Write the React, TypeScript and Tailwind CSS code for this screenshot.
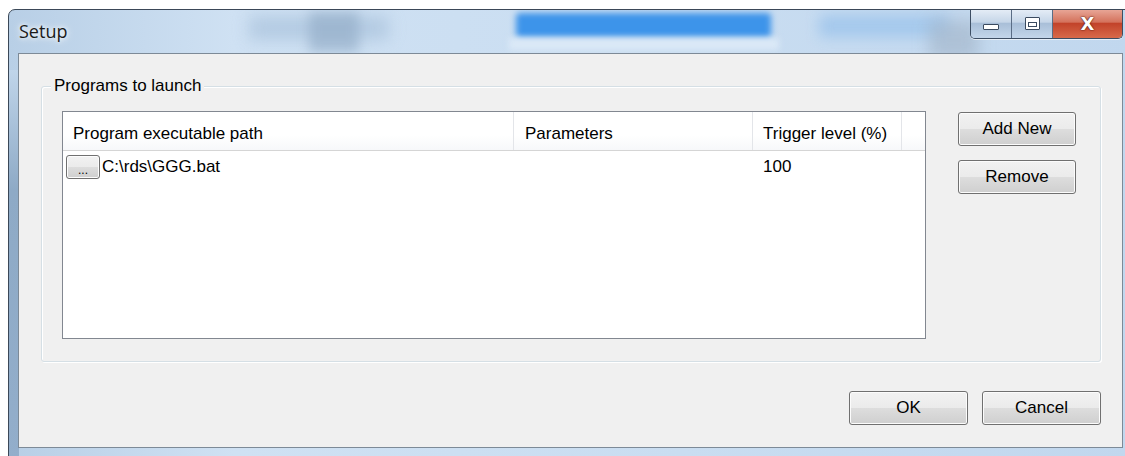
import type { ReactNode } from 'react';

const uiFont = { fontFamily: '"Liberation Sans", Arial, sans-serif' };

function WinButton({ children, className = '' }: { children: ReactNode; className?: string }) {
  return (
    <div
      className={`flex items-center justify-center rounded-[3px] border border-[#707070] shadow-[inset_0_0_0_1px_#fcfcfc] bg-[linear-gradient(#f2f2f2_0%,#ebebeb_50%,#dddddd_51%,#cfcfcf_100%)] text-[17px] text-black ${className}`}
    >
      {children}
    </div>
  );
}

function CaptionButtons() {
  return (
    <div className="flex h-[30px] -mt-px rounded-b-[5px] border border-t-0 border-[#3d4e63] overflow-hidden shadow-[0_1px_0_rgba(255,255,255,0.6)]">
      <div className="w-[41px] flex items-center justify-center bg-[linear-gradient(#e6eef7,#c6d6e8_45%,#a9bfd8_50%,#c3d6ea)] border-r border-[#5a6d85]">
        <div className="w-[16px] h-[6px] mt-[6px] rounded-[1px] border border-[#3b4b60] bg-white" />
      </div>
      <div className="w-[41px] flex items-center justify-center bg-[linear-gradient(#e6eef7,#c6d6e8_45%,#a9bfd8_50%,#c3d6ea)] border-r border-[#5a6d85]">
        <div className="w-[15px] h-[13px] rounded-[1px] border border-[#3b4b60] bg-white flex items-center justify-center">
          <div className="w-[9px] h-[5px] border border-[#3b4b60] mt-px" />
        </div>
      </div>
      <div className="w-[69px] flex items-center justify-center bg-[linear-gradient(#e9a99a,#d4725c_45%,#c2432a_50%,#d86a4a)]">
        <span className="text-white font-bold text-[18px] leading-none [text-shadow:0_0_1px_#4a1208,0_0_2px_#5a1a10]" style={{ fontFamily: '"DejaVu Sans", sans-serif' }}>
          X
        </span>
      </div>
    </div>
  );
}

function ProgramList() {
  return (
    <div className="w-[864px] h-[228px] border border-[#828790] bg-white flex flex-col">
      <div className="flex h-[39px] border-b border-[#d5d5d5] bg-[linear-gradient(#ffffff,#ffffff_60%,#f7f8fa)]">
        <div className="w-[451px] border-r border-[#e3e5e9] flex items-center pl-[10px] pt-[5px]">Program executable path</div>
        <div className="w-[239px] border-r border-[#e3e5e9] flex items-center pl-[11px] pt-[5px]">Parameters</div>
        <div className="w-[149px] border-r border-[#e3e5e9] flex items-center pl-[10px] pt-[5px]">Trigger level (%)</div>
        <div className="flex-1" />
      </div>
      <div className="flex h-[30px] items-center pt-[2px]">
        <div className="w-[451px] flex items-center pl-[3px]">
          <WinButton className="w-[34px] h-[24px] items-end pb-[2px] !text-[12px] leading-none">...</WinButton>
          <span className="ml-[2px]">C:\rds\GGG.bat</span>
        </div>
        <div className="w-[239px]" />
        <div className="pl-[10px]">100</div>
      </div>
    </div>
  );
}

export default function App() {
  return (
    <div className="w-[1125px] h-[456px] bg-white overflow-hidden pl-[8px] pt-[9px]" style={uiFont}>
      <div className="relative w-[1125px] h-[460px] rounded-tl-[7px] border border-[#3b4858] bg-[linear-gradient(90deg,#b8cfe6,#cfe1f3_20%,#c9ddf1_60%,#c1d7ee)] overflow-hidden flex flex-col px-[9px]">
        {/* blurred desktop showing through the glass */}
        <div className="absolute left-[240px] top-[6px] w-[140px] h-[24px] bg-[#a9c2dc] blur-[8px] opacity-70" />
        <div className="absolute left-[300px] top-[2px] w-[50px] h-[40px] bg-[#8fa9c4] blur-[6px] opacity-60" />
        <div className="absolute left-[507px] top-[3px] w-[255px] h-[25px] rounded-[4px] bg-[#3d94ea] blur-[3px]" />
        <div className="absolute left-[500px] top-[28px] w-[270px] h-[12px] bg-[#dbe9f7] blur-[3px]" />
        <div className="absolute left-[810px] top-[5px] w-[130px] h-[22px] bg-[#9cc4ec] blur-[7px] opacity-80" />
        <div className="absolute left-[920px] top-[10px] w-[50px] h-[40px] bg-[#a5b8cc] blur-[8px] opacity-70" />
        <div className="absolute left-0 top-[60px] w-[10px] h-[400px] bg-[linear-gradient(#c0d5ea,#8eaac6_30%,#93aecb)]" />
        <div className="absolute left-0 bottom-0 w-full h-[12px] bg-[linear-gradient(90deg,#7f9cb9,#c7dcf0_10%,#c5dbf0_60%,#9eb6ce_64%,#c7dcf0_70%)]" />

        {/* title bar */}
        <div className="relative h-[43px] flex items-start justify-between">
          <span className="text-[18px] text-[#1a1a1a] mt-[8px] ml-[1px] [text-shadow:0_0_8px_#ffffff,0_0_4px_#ffffff]" style={{ fontFamily: '"Open Sans", "Noto Sans", sans-serif' }}>
            Setup
          </span>
          <CaptionButtons />
        </div>

        {/* client area */}
        <div className="relative w-[1105px] h-[395px] border border-[#7d8a97] bg-[#f0f0f0] text-[17px] text-black flex flex-col">
          <div className="ml-[22px] mt-[32px] w-[1060px] h-[276px] rounded-[3px] border border-[#d5dfe5] shadow-[inset_1px_1px_0_#ffffff,1px_1px_0_#ffffff] flex flex-col">
            <div className="ml-[9px] -mt-[12px] h-[22px] self-start bg-[#f0f0f0] px-[3px] leading-[22px]">Programs to launch</div>
            <div className="flex pl-[20px] pt-[14px]">
              <ProgramList />
              <div className="ml-[32px] mt-px flex flex-col gap-[14px]">
                <WinButton className="w-[118px] h-[34px]">Add New</WinButton>
                <WinButton className="w-[118px] h-[34px]">Remove</WinButton>
              </div>
            </div>
          </div>
          <div className="flex justify-end gap-[14px] mt-[29px] mr-[21px]">
            <WinButton className="w-[119px] h-[34px]">OK</WinButton>
            <WinButton className="w-[119px] h-[34px]">Cancel</WinButton>
          </div>
        </div>
      </div>
    </div>
  );
}
